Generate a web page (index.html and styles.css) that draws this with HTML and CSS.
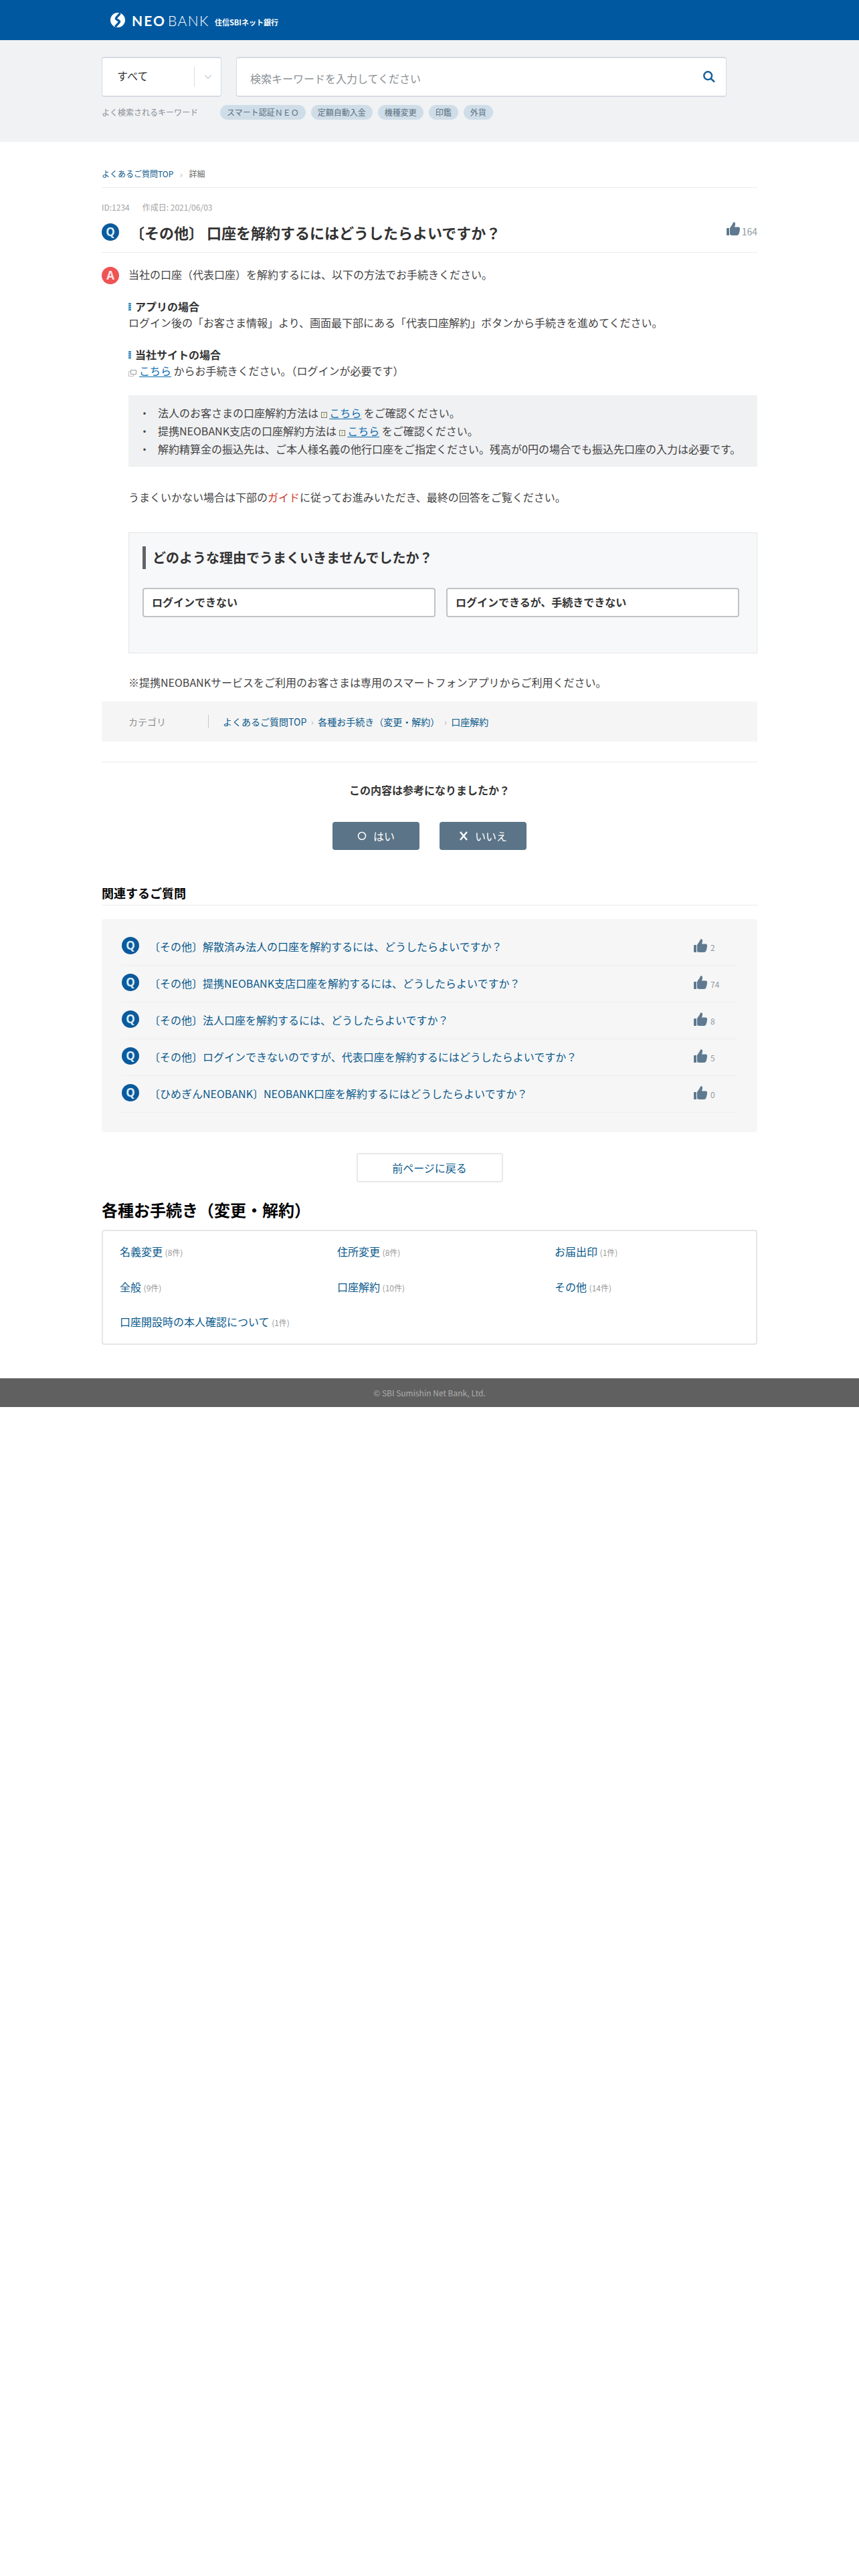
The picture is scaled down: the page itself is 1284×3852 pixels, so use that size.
FILE: index.html
```html
<!DOCTYPE html>
<html lang="ja">
<head>
<meta charset="utf-8">
<title>よくあるご質問</title>
<link rel="stylesheet" href="styles.css">
</head>
<body>
<svg class="defs" width="0" height="0" aria-hidden="true">
  <symbol id="thumb" viewBox="0 0 20 20">
    <path d="M.8 9H4v11H.8C.3 20 0 19.600 0 19V9.800C0 9.300.3 9 .8 9z"/>
    <path d="M5 9 9 3C9.500 1.500 10 .5 11 .3 12.500 0 13.500 1.500 13 4L12 7.500H18C19.500 7.500 20 8.500 20 10 20 12 19.500 15 18.500 17.500 18 19 17 20 15.500 20H8C6.500 20 5 19 5 18Z"/>
  </symbol>
</svg>

<header class="topbar">
  <div class="wrap">
    <div class="logo">
      <svg class="logo-mark" viewBox="0 0 24 24" aria-hidden="true"><circle cx="12" cy="12" r="12" fill="#fff"/><path d="M16 1 9.500 8.500C7.500 11.500 16.500 12.500 14.500 15.500L8 23" fill="none" stroke="#0059a0" stroke-width="3.600"/></svg>
      <span class="logo-neo">NEO</span><span class="logo-bank">BANK</span>
      <span class="logo-sub">住信SBIネット銀行</span>
    </div>
  </div>
</header>

<section class="searchband">
  <div class="wrap">
    <div class="searchrow">
      <div class="select">
        <span class="select-label">すべて</span>
        <span class="select-arrow"><svg width="10" height="6" viewBox="0 0 10 6" aria-hidden="true"><path d="M.5.500 5 5.500 9.500.500" fill="none" stroke="#9aa5ad" stroke-width="1"/></svg></span>
      </div>
      <div class="searchbox">
        <span class="placeholder">検索キーワードを入力してください</span>
        <svg class="search-icon" width="18" height="18" viewBox="0 0 18 18" aria-hidden="true"><circle cx="7.200" cy="7.200" r="5.900" fill="none" stroke="#155e96" stroke-width="2.400"/><path d="m11.500 11.500 5.500 5" stroke="#155e96" stroke-width="2.400" fill="none"/></svg>
      </div>
    </div>
    <div class="keywords">
      <span class="kw-label">よく検索されるキーワード</span>
      <span class="chip">スマート認証ＮＥＯ</span>
      <span class="chip">定額自動入金</span>
      <span class="chip">機種変更</span>
      <span class="chip">印鑑</span>
      <span class="chip">外貨</span>
    </div>
  </div>
</section>

<main class="wrap main">
  <nav class="crumbs"><a>よくあるご質問TOP</a><span class="sep">›</span><span>詳細</span></nav>
  <div class="meta"><span>ID:1234</span><span>作成日: 2021/06/03</span></div>

  <div class="qhead">
    <span class="badge q">Q</span>
    <h1>〔その他〕 口座を解約するにはどうしたらよいですか？</h1>
    <span class="likes"><svg class="thumb"><use href="#thumb"/></svg><span class="count">164</span></span>
  </div>

  <article class="answer">
    <span class="badge a">A</span>
    <div class="abody">
      <p>当社の口座（代表口座）を解約するには、以下の方法でお手続きください。</p>
      <p class="blank">&nbsp;</p>
      <p class="mark">アプリの場合</p>
      <p>ログイン後の「お客さま情報」より、画面最下部にある「代表口座解約」ボタンから手続きを進めてください。</p>
      <p class="blank">&nbsp;</p>
      <p class="mark">当社サイトの場合</p>
      <p><svg class="ext" width="12" height="12" viewBox="0 0 12 12" aria-hidden="true"><path d="M3.500 2.500h8v6h-8z" fill="#fff" stroke="#999"/><path d="M3.500 4.500h-3v7h7v-3" fill="none" stroke="#bbb"/></svg><a class="link">こちら</a> からお手続きください。（ログインが必要です）</p>
      <ul class="notes">
        <li>法人のお客さまの口座解約方法は <span class="tofu">?</span> <a class="link">こちら</a> をご確認ください。</li>
        <li>提携NEOBANK支店の口座解約方法は <span class="tofu">?</span> <a class="link">こちら</a> をご確認ください。</li>
        <li>解約精算金の振込先は、ご本人様名義の他行口座をご指定ください。残高が0円の場合でも振込先口座の入力は必要です。</li>
      </ul>
      <p class="guide-lead">うまくいかない場合は下部の<span class="red">ガイド</span>に従ってお進みいただき、最終の回答をご覧ください。</p>
      <div class="guide">
        <h2>どのような理由でうまくいきませんでしたか？</h2>
        <div class="guide-btns">
          <a class="guide-btn">ログインできない</a>
          <a class="guide-btn">ログインできるが、手続きできない</a>
        </div>
      </div>
      <p class="closing">※提携NEOBANKサービスをご利用のお客さまは専用のスマートフォンアプリからご利用ください。</p>
    </div>
  </article>

  <div class="category">
    <span class="cat-label">カテゴリ</span>
    <div class="cat-links"><a>よくあるご質問TOP</a><span class="sep">›</span><a>各種お手続き（変更・解約）</a><span class="sep">›</span><a>口座解約</a></div>
  </div>

  <section class="feedback">
    <p class="fb-title">この内容は参考になりましたか？</p>
    <div class="fb-btns">
      <a class="fb-btn"><svg width="14" height="14" viewBox="0 0 14 14" aria-hidden="true"><circle cx="7" cy="7" r="5.500" fill="none" stroke="#fff" stroke-width="1.500"/></svg>はい</a>
      <a class="fb-btn"><svg width="14" height="14" viewBox="0 0 14 14" aria-hidden="true"><path d="m2 1 10 12M12 1 2 13" stroke="#fff" stroke-width="2.400"/></svg>いいえ</a>
    </div>
  </section>

  <h3 class="related-title">関連するご質問</h3>
  <div class="related">
    <div class="rel-row"><span class="badge q">Q</span><a>〔その他〕解散済み法人の口座を解約するには、どうしたらよいですか？</a><span class="likes small"><svg class="thumb"><use href="#thumb"/></svg><span class="count">2</span></span></div>
    <div class="rel-row"><span class="badge q">Q</span><a>〔その他〕提携NEOBANK支店口座を解約するには、どうしたらよいですか？</a><span class="likes small"><svg class="thumb"><use href="#thumb"/></svg><span class="count">74</span></span></div>
    <div class="rel-row"><span class="badge q">Q</span><a>〔その他〕法人口座を解約するには、どうしたらよいですか？</a><span class="likes small"><svg class="thumb"><use href="#thumb"/></svg><span class="count">8</span></span></div>
    <div class="rel-row"><span class="badge q">Q</span><a>〔その他〕ログインできないのですが、代表口座を解約するにはどうしたらよいですか？</a><span class="likes small"><svg class="thumb"><use href="#thumb"/></svg><span class="count">5</span></span></div>
    <div class="rel-row"><span class="badge q">Q</span><a>〔ひめぎんNEOBANK〕NEOBANK口座を解約するにはどうしたらよいですか？</a><span class="likes small"><svg class="thumb"><use href="#thumb"/></svg><span class="count">0</span></span></div>
  </div>

  <div class="back-row"><a class="back">前ページに戻る</a></div>

  <h2 class="proc-title">各種お手続き（変更・解約）</h2>
  <div class="proc">
    <div class="proc-item"><a>名義変更</a> <span>(8件)</span></div>
    <div class="proc-item"><a>住所変更</a> <span>(8件)</span></div>
    <div class="proc-item"><a>お届出印</a> <span>(1件)</span></div>
    <div class="proc-item"><a>全般</a> <span>(9件)</span></div>
    <div class="proc-item"><a>口座解約</a> <span>(10件)</span></div>
    <div class="proc-item"><a>その他</a> <span>(14件)</span></div>
    <div class="proc-item"><a>口座開設時の本人確認について</a> <span>(1件)</span></div>
  </div>
</main>

<footer class="footer">© SBI Sumishin Net Bank, Ltd.</footer>
</body>
</html>
```

FILE: styles.css
```css
* { box-sizing: border-box; }
html, body { margin: 0; padding: 0; background: #fff; }
body {
  font-family: "Noto Sans CJK JP", "Noto Sans", sans-serif;
  font-size: 16px;
  line-height: 24px;
  color: #444;
}
a { text-decoration: none; color: inherit; }
p, h1, h2, h3, ul { margin: 0; padding: 0; }
.defs { position: absolute; }
.wrap { width: 980px; margin: 0 auto; }

.topbar { height: 60px; background: #0059a0; }
.logo { display: flex; align-items: center; height: 60px; padding-left: 13px; color: #fff; }
.logo-mark { width: 22px; height: 22px; margin-right: 10px; flex: none; }
.logo-neo { font-family: Lato, sans-serif; font-size: 21px; font-weight: 700; letter-spacing: 2px; line-height: 1; }
.logo-bank { font-family: Lato, sans-serif; font-size: 21px; font-weight: 300; letter-spacing: 1.500px; line-height: 1; margin-left: 3px; }
.logo-sub { font-size: 11px; font-weight: 700; line-height: 1; margin: 6px 0 0 8px; }

.searchband { height: 152px; background: #f0f2f4; padding-top: 25px; }
.searchrow { display: flex; gap: 22px; }
.select, .searchbox {
  height: 60px;
  background: #fff;
  border: 1px solid #d6dbe2;
  border-top-width: 2px;
  border-bottom-width: 2px;
  border-radius: 4px;
  display: flex;
  align-items: center;
}
.select { width: 179px; padding-left: 22px; }
.select-label { flex: 1; margin-top: -4px; color: #333; }
.select-arrow { width: 40px; height: 30px; border-left: 1px solid #d9dde2; display: flex; align-items: center; justify-content: center; }
.searchbox { width: 733px; padding: 0 16px 0 20px; justify-content: space-between; }
.placeholder { color: #8a8f94; margin-top: 4px; }
.keywords { display: flex; align-items: center; margin-top: 12px; height: 22px; font-size: 12px; }
.kw-label { width: 177px; color: #8a8f94; line-height: 22px; }
.chip { height: 22px; line-height: 22px; padding: 0 10px; margin-right: 8px; border-radius: 11px; background: #cfdde8; color: #5a7080; }
.chip:first-of-type { letter-spacing: -.2px; }

.crumbs { display: flex; align-items: center; height: 18px; margin-top: 39px; font-size: 12px; line-height: 18px; color: #666; }
.crumbs a { color: #0b5a8c; }
.sep { color: #b5b5b5; text-align: center; font-size: 14px; width: 17px; }
.crumbs .sep { width: 23px; }
.meta { border-top: 1px solid #ebebeb; margin-top: 11px; padding-top: 20px; display: flex; gap: 19px; font-size: 12px; line-height: 18px; color: #a3a3a3; }

.qhead { display: flex; align-items: center; gap: 16px; margin-top: 12px; padding-bottom: 14px; border-bottom: 1px solid #ebebeb; }
.qhead h1 { flex: 1; font-size: 22px; line-height: 32px; font-weight: 700; color: #333; }
.badge {
  flex: none;
  width: 26px;
  height: 26px;
  border-radius: 50%;
  color: #d9eefc;
  font-family: "Open Sans", sans-serif;
  font-size: 17px;
  font-weight: 700;
  line-height: 26px;
  text-align: center;
}
.badge.q { background: #0b5a9c; }
.badge.a { background: #ef5354; color: #fde9e9; }
.likes { display: flex; align-items: flex-end; gap: 4px; font-size: 14px; line-height: 18px; color: #8f9aa3; }
.qhead .likes { gap: 3px; margin-top: -10px; }
.count { margin-bottom: -3px; }
.thumb { width: 20px; height: 20px; fill: #5f7a90; flex: none; }

.answer { display: flex; gap: 14px; padding-top: 20px; }
.answer > .badge { margin-top: 1px; }
.abody { flex: 1; min-width: 0; }
.abody p { min-height: 24px; }
.mark { font-weight: 700; color: #333; padding-left: 10px; position: relative; }
.mark::before { content: ""; position: absolute; left: 0; top: 7px; width: 4px; height: 12px; background: repeating-linear-gradient(#3d8cbd 0 2px, #a9cfe4 2px 3px); }
.link { color: #0b6bb0; text-decoration: underline; text-underline-offset: 2px; }
.ext { vertical-align: -2px; margin-right: 4px; }
.tofu { display: inline-block; width: 9px; height: 9px; border: 1px solid #777; background: #f4f4d8; font-size: 6px; line-height: 7px; text-align: center; vertical-align: 1px; color: #555; }
.notes { list-style: none; background: #f0f1f3; margin-top: 25px; padding: 12.500px 10px 12.500px 44px; }
.notes li { position: relative; line-height: 27.300px; white-space: nowrap; }
.notes li::before { content: "・"; position: absolute; left: -28px; font-size: 16px; }
.guide-lead { margin-top: 33px; }
.red { color: #d03a2e; }
.guide { margin-top: 41px; height: 181px; width: 940px; background: #f7f8fa; border: 1px solid #e6e6e6; padding: 20px; }
.guide h2 { font-size: 20px; line-height: 34px; font-weight: 700; border-left: 5px solid #606468; padding-left: 10px; color: #333; }
.guide-btns { display: flex; gap: 16px; margin-top: 28px; }
.guide-btn { width: 438px; height: 44px; line-height: 38px; padding-left: 12px; background: #fff; border: 2px solid #c2c2c2; border-radius: 4px; font-weight: 700; color: #333; }
.closing { margin-top: 31px; }

.category { display: flex; align-items: center; height: 60px; margin-top: 17px; background: #f5f5f5; padding-left: 40px; font-size: 14px; }
.cat-label { width: 119px; color: #8f8f8f; }
.cat-links { display: flex; align-items: center; height: 20px; padding-left: 21px; border-left: 1px solid #c9c9c9; color: #0b5a8c; }

.feedback { margin-top: 30px; border-top: 1px solid #ebebeb; padding-top: 29px; text-align: center; }
.fb-title { font-weight: 700; line-height: 24px; color: #333; }
.fb-btns { display: flex; justify-content: center; gap: 30px; margin-top: 36px; }
.fb-btn { display: flex; align-items: center; justify-content: center; gap: 10px; width: 130px; height: 42px; background: #5b7488; border-radius: 4px; color: #fff; }

.related-title { margin-top: 51px; height: 32px; font-size: 18px; line-height: 26px; font-weight: 700; color: #000; border-bottom: 1px solid #ebebeb; }
.related { margin-top: 20px; height: 319px; background: #f6f6f6; border-radius: 4px; padding: 15px 32px 0 30px; }
.rel-row { display: flex; align-items: center; height: 55px; border-bottom: 1px solid #eeeeee; color: #0b5a8c; }
.rel-row .badge { margin-right: 15px; margin-top: -4px; }
.rel-row a { flex: 1; margin-top: -2px; }
.likes.small { width: 63px; margin-top: -4px; font-size: 12px; gap: 5px; line-height: 16px; }
.likes.small .count { margin-bottom: -1px; }

.back-row { display: flex; justify-content: center; margin-top: 31px; }
.back { width: 219px; height: 44px; line-height: 40px; text-align: center; border: 2px solid #e8e8e8; border-radius: 4px; color: #0b5a8c; }
.proc-title { margin-top: 23px; font-size: 24px; line-height: 36px; font-weight: 700; color: #000; }
.proc { margin-top: 12px; height: 172px; border: 2px solid #e6e6e6; border-radius: 4px; padding: 5px 25px 0; display: grid; grid-template-columns: repeat(3, 325px); grid-auto-rows: 52.500px; align-items: center; }
.proc-item { color: #0b5a8c; }
.proc-item span { font-size: 12px; color: #9a9a9a; }

.footer { margin-top: 50px; height: 43px; line-height: 43px; background: #606060; color: #adadad; font-size: 12px; text-align: center; }
```
